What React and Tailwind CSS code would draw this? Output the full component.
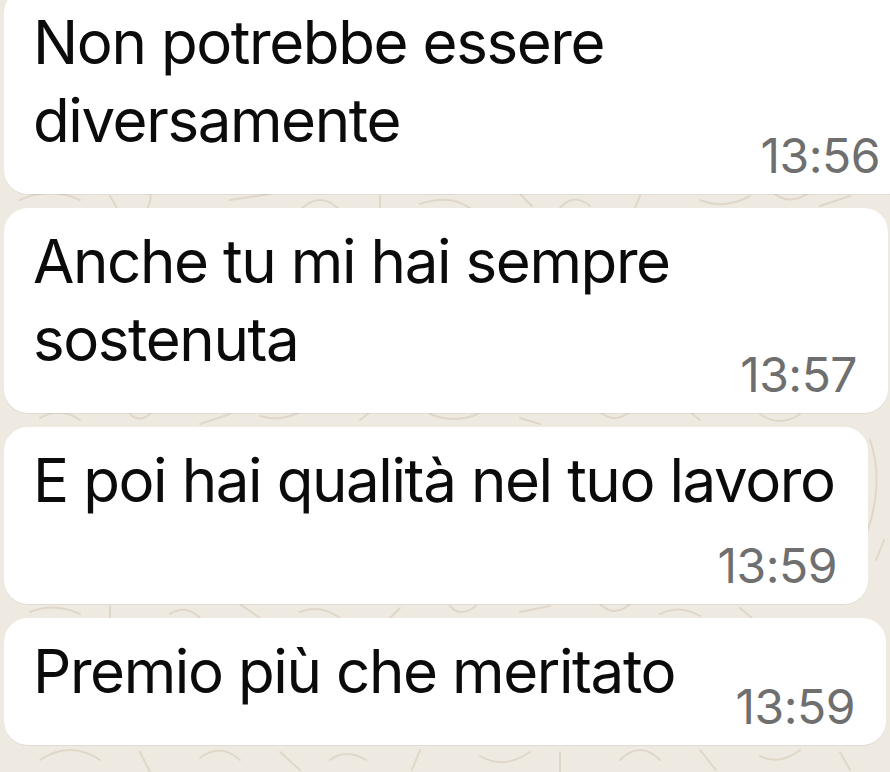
const messages = [
  { id: 1, text: "Non potrebbe essere diversamente", time: "13:56", width: "w-[907px]", timeGap: "-mt-[27px]", top: "-mt-[11px]" },
  { id: 2, text: "Anche tu mi hai sempre sostenuta", time: "13:57", width: "w-[884px]", timeGap: "-mt-[27px]" },
  { id: 3, text: "E poi hai qualità nel tuo lavoro", time: "13:59", width: "w-[864px]", timeGap: "mt-[23px]" },
  { id: 4, text: "Premio più che meritato", time: "13:59", width: "w-[882px]", timeGap: "-mt-[27px]" },
];

// loose doodle strokes for the wallpaper, only the gaps between bubbles show them
const doodles = [
  "M20 200 q30 -14 60 0", "M110 196 l8 14", "M150 192 q2 10 -4 18", "M230 200 l40 -6",
  "M300 210 q20 -20 40 0", "M380 196 l0 14", "M420 204 q30 -10 50 4", "M520 194 l12 12",
  "M560 208 q14 -16 30 -2", "M640 196 l-6 14", "M700 200 q24 10 50 -4", "M770 190 q18 18 40 2",
  "M820 206 l30 -10", "M40 418 q20 -12 40 2", "M130 414 q10 10 22 -2", "M200 424 l30 -10",
  "M260 416 q20 6 40 -4", "M360 420 l10 -8", "M430 414 q24 10 48 0", "M520 418 l20 6",
  "M600 412 q14 12 30 0", "M700 420 l-10 -8", "M760 414 q20 14 40 0", "M870 440 q14 40 -2 90",
  "M876 560 l8 -20", "M30 612 q24 -10 50 2", "M110 606 l0 14", "M170 614 q16 -10 30 4",
  "M240 604 l20 14", "M300 612 q20 -8 40 6", "M400 608 l-10 10", "M450 606 q10 12 26 0",
  "M520 612 l30 -6", "M600 604 q14 14 30 0", "M660 614 q20 -10 40 2", "M740 608 l12 10",
  "M40 760 q30 -20 60 0", "M140 752 l10 20", "M200 758 q20 -16 40 2", "M280 752 l20 18",
  "M330 760 q16 -12 36 0", "M420 750 l-8 20", "M480 756 q24 14 50 -4", "M560 752 l0 20",
  "M620 760 q20 -20 40 0", "M700 750 l16 20", "M760 756 q20 10 40 -6", "M840 752 l10 18",
];

function Bubble({ msg }) {
  return (
    <div className={`${msg.width} ${msg.top || ""} ml-[4px] rounded-[24px] bg-white pt-[14px] pr-[31px] pb-[15px] pl-[29px] shadow-[0_1px_0_rgba(0,0,0,0.06)]`}>
      <p className="text-[60px] leading-[78px] text-[#0b0b0b] tracking-[-1.4px]">{msg.text}</p>
      <div className={`${msg.timeGap} text-right text-[48px] leading-[47px] tracking-[-0.5px] text-[#6f6f6f]`}>{msg.time}</div>
    </div>
  );
}

export default function App() {
  return (
    <div className="relative h-[772px] w-[890px] overflow-hidden bg-[#efeae1] font-[Inter,sans-serif]">
      <svg className="absolute inset-0" width="890" height="772" viewBox="0 0 890 772" fill="none">
        {doodles.map((d, i) => (
          <path key={i} d={d} stroke="#e0d7c9" strokeWidth="2" strokeLinecap="round" />
        ))}
      </svg>
      <div className="relative flex flex-col gap-[14px]">
        {messages.map((m) => (
          <Bubble key={m.id} msg={m} />
        ))}
      </div>
    </div>
  );
}
